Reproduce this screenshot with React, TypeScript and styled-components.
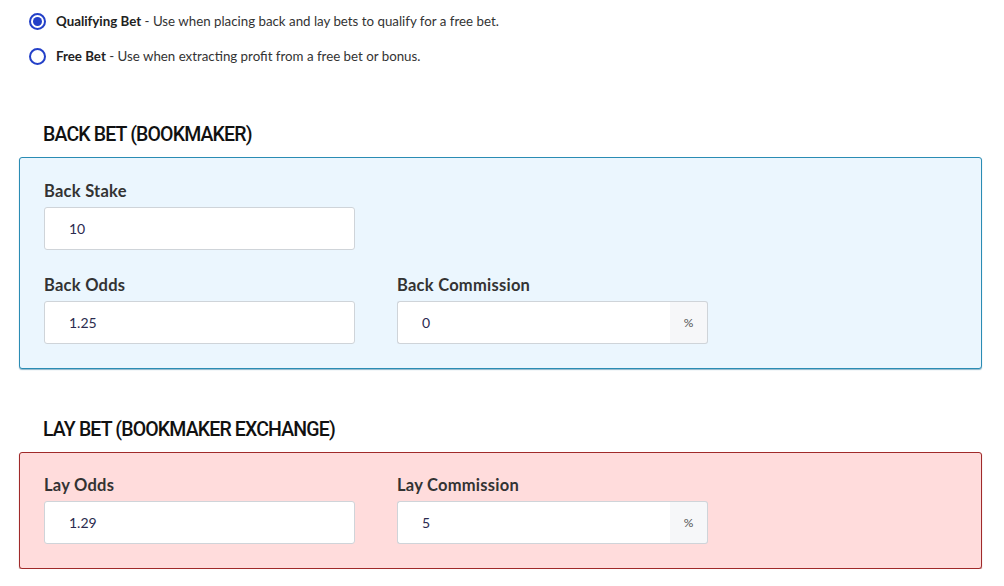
import { useState } from "react";
import styled, { createGlobalStyle } from "styled-components";

const GlobalStyle = createGlobalStyle`
  body {
    margin: 0;
    background: #ffffff;
    font-family: Lato, "Noto Sans", sans-serif;
    color: #333333;
  }
`;

const Page = styled.div`
  width: 963px;
  padding: 12px 22px 0 19px;
`;

const RadioList = styled.div`
  display: flex;
  flex-direction: column;
  gap: 17px;
  padding-left: 10px;
`;

const RadioRow = styled.label`
  display: flex;
  align-items: center;
  gap: 10px;
  height: 18px;
  font-size: 13.3px;
  color: #333;
  cursor: pointer;

  b {
    font-weight: 700;
    color: #222;
  }
`;

const RadioCircle = styled.span<{ $checked: boolean }>`
  width: 13px;
  height: 13px;
  border: 2px solid #2340c8;
  border-radius: 50%;
  display: flex;
  align-items: center;
  justify-content: center;
  flex-shrink: 0;

  &::after {
    content: "";
    width: 9px;
    height: 9px;
    border-radius: 50%;
    background: ${(p) => (p.$checked ? "#2340c8" : "transparent")};
  }
`;

const SectionTitle = styled.h2<{ $top: number }>`
  margin: ${(p) => p.$top}px 0 10px 24px;
  font-family: Roboto, "Noto Sans", sans-serif;
  font-size: 19.5px;
  line-height: 24px;
  font-weight: 500;
  letter-spacing: -0.85px;
  color: #111;
`;

const Box = styled.div<{ $variant: "back" | "lay" }>`
  border: 1px solid ${(p) => (p.$variant === "back" ? "#2a8cb4" : "#a02a2a")};
  background: ${(p) => (p.$variant === "back" ? "#ebf6fe" : "#ffdcdc")};
  border-radius: 3px;
  box-shadow: 0 1px 1px ${(p) => (p.$variant === "back" ? "rgba(30, 110, 150, 0.5)" : "rgba(140, 30, 30, 0.5)")};
  padding: ${(p) => (p.$variant === "back" ? "23px" : "22px")} 24px 24px;
  display: grid;
  grid-template-columns: 311px 311px;
  column-gap: 42px;
  row-gap: 25px;
`;

const Field = styled.div`
  display: flex;
  flex-direction: column;
`;

const Label = styled.div`
  font-size: 16.5px;
  line-height: 20px;
  font-weight: 700;
  letter-spacing: 0.25px;
  color: #333;
  margin-bottom: 6px;
`;

const InputGroup = styled.div`
  display: flex;
  height: 43px;
`;

const Input = styled.input<{ $addon?: boolean }>`
  box-sizing: border-box;
  width: ${(p) => (p.$addon ? "273px" : "311px")};
  height: 43px;
  border: 1px solid #cfd4d9;
  border-right: ${(p) => (p.$addon ? "none" : "1px solid #cfd4d9")};
  border-radius: ${(p) => (p.$addon ? "3px 0 0 3px" : "3px")};
  padding: 0 0 0 24px;
  font-family: Lato, "Noto Sans", sans-serif;
  font-size: 14px;
  color: #2b2b4f;
  background: #fff;
  outline: none;
`;

const Addon = styled.span`
  box-sizing: border-box;
  width: 38px;
  height: 43px;
  display: flex;
  align-items: center;
  justify-content: center;
  background: #f6f7f9;
  border: 1px solid #cfd4d9;
  border-left: none;
  border-radius: 0 3px 3px 0;
  font-size: 12px;
  color: #555;
`;

const NumberField = ({
  label,
  value,
  percent,
}: {
  label: string;
  value: string;
  percent?: boolean;
}) => {
  const [val, setVal] = useState(value);
  return (
    <Field>
      <Label>{label}</Label>
      <InputGroup>
        <Input $addon={percent} value={val} onChange={(e) => setVal(e.target.value)} />
        {percent && <Addon>%</Addon>}
      </InputGroup>
    </Field>
  );
};

export default function App() {
  const [mode, setMode] = useState("qualifying");
  return (
    <Page>
      <GlobalStyle />
      <RadioList>
        <RadioRow onClick={() => setMode("qualifying")}>
          <RadioCircle $checked={mode === "qualifying"} />
          <span>
            <b>Qualifying Bet</b> - Use when placing back and lay bets to qualify for a free bet.
          </span>
        </RadioRow>
        <RadioRow onClick={() => setMode("free")}>
          <RadioCircle $checked={mode === "free"} />
          <span>
            <b>Free Bet</b> - Use when extracting profit from a free bet or bonus.
          </span>
        </RadioRow>
      </RadioList>

      <SectionTitle $top={58}>BACK BET (BOOKMAKER)</SectionTitle>
      <Box $variant="back">
        <NumberField label="Back Stake" value="10" />
        <div />
        <NumberField label="Back Odds" value="1.25" />
        <NumberField label="Back Commission" value="0" percent />
      </Box>

      <SectionTitle $top={49}>LAY BET (BOOKMAKER EXCHANGE)</SectionTitle>
      <Box $variant="lay">
        <NumberField label="Lay Odds" value="1.29" />
        <NumberField label="Lay Commission" value="5" percent />
      </Box>
    </Page>
  );
}
